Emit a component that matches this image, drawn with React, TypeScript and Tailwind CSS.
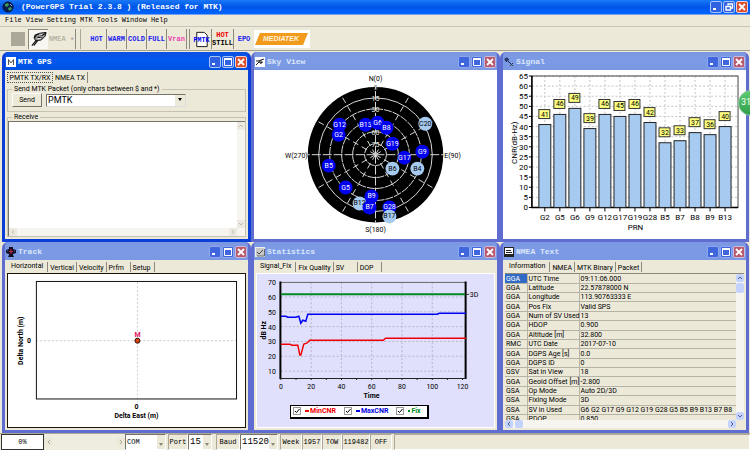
import type { ReactNode } from 'react';
import { clsx } from 'clsx';

const satellites = [
  { id: 'G2', x: 85, y: 65 },
  { id: 'G12', x: 86, y: 55 },
  { id: 'B13', x: 112, y: 55 },
  { id: 'G6', x: 124, y: 53 },
  { id: 'B8', x: 133, y: 58 },
  { id: 'G19', x: 139, y: 74 },
  { id: 'G17', x: 151, y: 88 },
  { id: 'G9', x: 169, y: 82 },
  { id: 'C20', x: 172, y: 54, idle: true },
  { id: 'B6', x: 139, y: 99, idle: true },
  { id: 'B4', x: 164, y: 99, idle: true },
  { id: 'B5', x: 75, y: 96 },
  { id: 'G5', x: 92, y: 118 },
  { id: 'B12', x: 106, y: 134, idle: true },
  { id: 'B9', x: 118, y: 127 },
  { id: 'B7', x: 116, y: 138 },
  { id: 'G28', x: 136, y: 138 },
  { id: 'B17', x: 136, y: 147, idle: true },
];

const signals = [
  { prn: 'G2', cnr: 41 },
  { prn: 'G5', cnr: 46 },
  { prn: 'G6', cnr: 49 },
  { prn: 'G9', cnr: 39 },
  { prn: 'G12', cnr: 46 },
  { prn: 'G17', cnr: 45 },
  { prn: 'G19', cnr: 46 },
  { prn: 'G28', cnr: 42 },
  { prn: 'B5', cnr: 32 },
  { prn: 'B7', cnr: 33 },
  { prn: 'B8', cnr: 37 },
  { prn: 'B9', cnr: 36 },
  { prn: 'B13', cnr: 40 },
];

const nmeaRows = [
  ['GGA', 'UTC Time', '09:11:06.000'],
  ['GGA', 'Latitude', '22.57878000 N'],
  ['GGA', 'Longitude', '113.90763333 E'],
  ['GGA', 'Pos Fix', 'Valid SPS'],
  ['GGA', 'Num of SV Used', '13'],
  ['GGA', 'HDOP', '0.900'],
  ['GGA', 'Altitude [m]', '32.800'],
  ['RMC', 'UTC Date', '2017-07-10'],
  ['GGA', 'DGPS Age [s]', '0.0'],
  ['GGA', 'DGPS ID', '0'],
  ['GSV', 'Sat in View', '18'],
  ['GGA', 'Geoid Offset [m]', '-2.800'],
  ['GSA', 'Op Mode', 'Auto 2D/3D'],
  ['GSA', 'Fixing Mode', '3D'],
  ['GSA', 'SV in Used', 'G6 G2 G17 G9 G12 G19 G28 G5 B5 B9 B13 B7 B8'],
  ['GSA', 'PDOP', '0.850'],
];

function CaptionButton({ kind, faded }: { kind: 'min' | 'max' | 'restore' | 'close'; faded?: boolean }) {
  const label = { min: 'Minimize', max: 'Maximize', restore: 'Restore', close: 'Close' }[kind];
  return (
    <button
      type="button"
      aria-label={label}
      className={clsx(
        'h-3 w-3 shrink-0 rounded-xs border',
        kind === 'close'
          ? faded
            ? 'border-[#c9b8e0] bg-[#b85a6c]'
            : 'border-[#f0d0d0] bg-[#dc4f2c]'
          : faded
            ? 'border-[#8ea6ee] bg-[#3f66dc]'
            : 'border-[#a9c2f8] bg-[#2e62e0]',
      )}
    >
      <svg viewBox="0 0 10 10" className="block h-full w-full" fill="none" stroke="#fff">
        {kind === 'min' && <path d="M2 7h3" strokeWidth="2" />}
        {kind === 'max' && (
          <>
            <path d="M1.5 2v6.5h7V2" />
            <path d="M1 2h8" strokeWidth="2" />
          </>
        )}
        {kind === 'restore' && (
          <>
            <path d="M4 3.5V2h4.5v4H7" strokeWidth="1.4" />
            <path d="M2 4.5h4.5V8H2z" strokeWidth="1.4" />
          </>
        )}
        {kind === 'close' && <path d="M2 2l6 6M8 2L2 8" strokeWidth="1.8" />}
      </svg>
    </button>
  );
}

function GlobeIcon() {
  return (
    <svg viewBox="0 0 12 12" className="h-3 w-3 shrink-0">
      <circle cx="6" cy="6" r="5" fill="#0a1c50" stroke="#061030" />
      <path d="M3 3l3-1 1 2-2 2-2-1zM6 7l3-1 1 2-3 2z" fill="#3c9a58" />
      <path d="M8 3l2 2" stroke="#8ab0e0" />
    </svg>
  );
}

function MtkIcon() {
  return (
    <svg viewBox="0 0 10 10" className="h-2.5 w-2.5 shrink-0">
      <rect width="10" height="10" fill="#fff" />
      <path d="M2.5 8V2.5L5 6l2.5-3.5V8" fill="none" stroke="#555" />
    </svg>
  );
}

function SkyIcon() {
  return (
    <svg viewBox="0 0 10 10" className="h-2.5 w-2.5 shrink-0" fill="none" stroke="#222">
      <rect width="10" height="10" fill="#fff" stroke="none" />
      <path d="M1 4h3l2-1 3-1M4 3l1 3 3-1M1 8l3-3M6 3v4" />
    </svg>
  );
}

function SignalIcon() {
  return (
    <svg viewBox="0 0 10 10" className="h-2.5 w-2.5 shrink-0" fill="none" stroke="#1a2450">
      <circle cx="2.5" cy="2.5" r="1.5" fill="#384878" />
      <path d="M4 4l3 3M4 2l1 1M2 4l1 1" />
      <path d="M7 7l2 2M9 6L6 9" stroke="#333" />
    </svg>
  );
}

function TrackIcon() {
  return (
    <svg viewBox="0 0 10 10" className="h-2.5 w-2.5 shrink-0">
      <path d="M3 0h4v2l3 1v3L7 7v1l1 2H2l1-2V7L0 6V3l3-1z" fill="#140c20" />
      <path d="M5 2v5M3 4.5h4" stroke="#c02848" />
      <path d="M1 4h1M8 4h1" stroke="#3858c0" />
    </svg>
  );
}

function StatisticsIcon() {
  return (
    <svg viewBox="0 0 10 10" className="h-2.5 w-2.5 shrink-0" fill="none">
      <rect x=".5" y=".5" width="9" height="9" fill="#c8c8c8" stroke="#eee" />
      <path d="M2 5l2 2 4-4" stroke="#444" />
      <path d="M2 9h7.5V2" stroke="#666" />
    </svg>
  );
}

function NmeaIcon() {
  return (
    <svg viewBox="0 0 10 10" className="h-2.5 w-2.5 shrink-0" stroke="#222">
      <rect x=".5" y=".5" width="9" height="9" fill="#fff" />
      <path d="M2 3.5h5M2 5.5h6" />
      <path d="M1 8h8" strokeWidth="2" />
    </svg>
  );
}

function MdiWindow({
  title,
  icon,
  active,
  children,
}: {
  title: string;
  icon: ReactNode;
  active?: boolean;
  children: ReactNode;
}) {
  return (
    <section
      className={clsx(
        'flex min-h-0 min-w-0 flex-col rounded-t-md border-x-3 border-b-3',
        active ? 'border-[#0c3fd8] bg-[#0c3fd8]' : 'border-[#5f6cd0] bg-[#5f6cd0]',
      )}
    >
      <header
        className={clsx(
          'flex h-[18px] shrink-0 items-center gap-px rounded-t bg-linear-to-b px-px pt-0.5',
          active ? 'from-[#0c50e4] via-[#0058ee] to-[#0050e0]' : 'from-[#7d97e2] via-[#7b9be6] to-[#7a98e2]',
        )}
      >
        {icon}
        <h2
          className={clsx(
            "flex-1 truncate pl-px font-['Liberation_Mono',monospace] text-[8px] font-bold",
            active ? 'text-white' : 'text-[#dbe6fb]',
          )}
        >
          {title}
        </h2>
        <CaptionButton kind="min" faded={!active} />
        <CaptionButton kind="max" faded={!active} />
        <CaptionButton kind="close" faded={!active} />
      </header>
      {children}
    </section>
  );
}

function Tabs({ items }: { items: string[] }) {
  return (
    <div role="tablist" className="flex h-[13px] shrink-0 items-end pb-px leading-2">
      {items.map((item, i) => (
        <button
          key={item}
          type="button"
          role="tab"
          aria-selected={i === 0}
          className={clsx(
            'h-[10px] min-w-6 border-r border-[#8c897c] text-left whitespace-nowrap',
            i === 0 ? 'pr-1 pb-0.5 pl-1' : 'px-0.5 pt-px',
          )}
        >
          {item}
        </button>
      ))}
    </div>
  );
}

function Arrow({ dir, className }: { dir: 'up' | 'down' | 'left' | 'right'; className?: string }) {
  const d = {
    up: 'M2 5l2-2 2 2',
    down: 'M2 3l2 2 2-2',
    left: 'M5 2L3 4l2 2',
    right: 'M3 2l2 2-2 2',
  }[dir];
  return (
    <svg viewBox="0 0 8 8" className={clsx('h-2 w-2 shrink-0', className)} fill="none" stroke="currentColor">
      <path d={d} />
    </svg>
  );
}

function PmtkPanel() {
  return (
    <div className="flex min-h-0 flex-1 flex-col bg-[#ece9d8] px-0.5 pt-0.5">
      <div role="tablist" className="flex h-3 shrink-0 leading-2">
        <button
          type="button"
          role="tab"
          aria-selected="true"
          className="h-[11px] w-[46px] border border-dotted border-[#555] whitespace-nowrap"
        >
          PMTK TX/RX
        </button>
        <button type="button" role="tab" aria-selected="false" className="h-[11px] border-r border-[#8c897c] px-0.5 pt-px">
          NMEA TX
        </button>
      </div>
      <fieldset className="mt-px min-w-0 border border-[#c5c2b2] px-1 pb-1">
        <legend className="px-0.5 leading-2">Send MTK Packet (only chars between $ and *)</legend>
        <div className="flex items-center gap-1">
          <button
            type="button"
            className="h-[14px] w-[30px] border border-t-white border-r-[#77746a] border-b-[#77746a] border-l-white leading-3"
          >
            Send
          </button>
          <div className="flex h-[13px] w-[140px] border border-t-[#77746a] border-r-[#ddd] border-b-[#ddd] border-l-[#77746a] bg-white">
            <input
              aria-label="PMTK packet"
              defaultValue="PMTK"
              className="min-w-0 flex-1 pl-px text-[9px] leading-3 outline-none"
            />
            <button type="button" aria-label="Show packets" className="flex w-[10px] items-center justify-center bg-[#ece9d8]">
              <svg viewBox="0 0 6 4" className="h-1 w-1.5">
                <path d="M1 0h4L3 3z" />
              </svg>
            </button>
          </div>
        </div>
      </fieldset>
      <fieldset className="mt-px mb-0.5 flex min-h-0 min-w-0 flex-1 flex-col border border-[#c5c2b2]">
        <legend className="ml-1 px-0.5 leading-2">
          <label htmlFor="receive">Receive</label>
        </legend>
        <div className="flex h-full min-h-0 flex-1 border-t border-l border-[#77746a] bg-white">
          <div className="flex min-w-0 flex-1 flex-col">
            <textarea id="receive" className="min-h-0 flex-1 resize-none outline-none" />
            <div className="flex h-2 justify-between bg-[#f6f5f0] text-[#c0bdb0]">
              <Arrow dir="left" className="bg-[#eceae0]" />
              <Arrow dir="right" className="bg-[#eceae0]" />
            </div>
          </div>
          <div className="flex w-2 flex-col justify-between bg-[#f6f5f0] pb-2 text-[#c0bdb0]">
            <Arrow dir="up" className="bg-[#eceae0]" />
            <Arrow dir="down" className="bg-[#eceae0]" />
          </div>
        </div>
      </fieldset>
    </div>
  );
}

function SkyPlot() {
  const cx = 122;
  const cy = 85;
  const spokes = Array.from({ length: 12 }, (_, i) => (i * Math.PI) / 6);
  return (
    <svg viewBox="0 0 244 170" className="min-h-0 w-full flex-1 bg-white" fontSize="7" textAnchor="middle">
      <circle cx={cx} cy={cy} r="68" />
      <g stroke="#d8d8d8" fill="none">
        {[11, 23, 34, 46, 57].map((r) => (
          <circle key={r} cx={cx} cy={cy} r={r} strokeDasharray={r === 57 ? undefined : '8 1'} />
        ))}
        {spokes.map((a, i) => (
          <line
            key={i}
            x1={cx}
            y1={cy}
            x2={cx + 68 * Math.cos(a)}
            y2={cy + 68 * Math.sin(a)}
            strokeDasharray={i % 3 === 0 ? '9 2' : '6 4'}
          />
        ))}
      </g>
      <text x={cx} y="11">N(0)</text>
      <text x={cx} y="163">S(180)</text>
      <text x="54" y="88" textAnchor="end">W(270)</text>
      <text x="191" y="88" textAnchor="start">E(90)</text>
      <g fill="#e8e8e8">
        <text x={cx} y="20" fill="#999">5</text>
        <text x={cx} y="31">15</text>
        <text x={cx} y="42">30</text>
        <text x={cx} y="65">60</text>
        <text x={cx} y="77">75</text>
      </g>
      {satellites.map((s) => (
        <g key={s.id}>
          <circle cx={s.x} cy={s.y} r="7" fill={s.idle ? '#a6caf0' : '#0000f0'} />
          <text x={s.x} y={s.y + 2} fill={s.idle ? '#000' : '#fff'}>
            {s.id}
          </text>
        </g>
      ))}
    </svg>
  );
}

function SignalChart() {
  const left = 29;
  const right = 236;
  const base = 138;
  const yOf = (v: number) => base - (v * 132) / 65;
  const ticks = Array.from({ length: 14 }, (_, i) => i * 5);
  const xOf = (i: number) => 42 + (i * 181) / 12;
  return (
    <svg viewBox="0 0 244 170" className="min-h-0 w-full flex-1 bg-white" fontSize="8" textAnchor="middle">
      <g stroke="#c4c4c4" strokeDasharray="2 2">
        {ticks.map((t) => (
          <line key={t} x1={left} x2={right} y1={yOf(t)} y2={yOf(t)} />
        ))}
        {signals.map((s, i) => (
          <line key={s.prn} x1={xOf(i)} x2={xOf(i)} y1="6" y2={base} />
        ))}
      </g>
      <rect x={left} y="6" width={right - left} height="132" fill="none" stroke="#444" />
      <path d={`M${left} 6V${base}H${right}`} fill="none" stroke="#000" strokeWidth="1.5" />
      {ticks.map((t) => (
        <g key={t}>
          <line x1={left - 3} x2={left} y1={yOf(t)} y2={yOf(t)} stroke="#000" />
          <text x={left - 4} y={yOf(t) + 3} textAnchor="end">
            {t}
          </text>
        </g>
      ))}
      {signals.map((s, i) => (
        <g key={s.prn}>
          <rect x={xOf(i) - 6} y={yOf(s.cnr)} width="12" height={base - yOf(s.cnr)} fill="#a6caf0" stroke="#222" />
          <rect x={xOf(i) - 6} y={yOf(s.cnr) - 15} width="11" height="9" fill="#ffff80" stroke="#333" />
          <text x={xOf(i)} y={yOf(s.cnr) - 8} fontSize="7">
            {s.cnr}
          </text>
          <line x1={xOf(i)} x2={xOf(i)} y1={base} y2={base + 4} stroke="#000" />
          <text x={xOf(i)} y="151">
            {s.prn}
          </text>
        </g>
      ))}
      <text x="133" y="161">PRN</text>
      <text transform="translate(14 73) rotate(-90)">CNR(dB-Hz)</text>
    </svg>
  );
}

function TrackPanel() {
  return (
    <div className="flex min-h-0 flex-1 flex-col bg-[#ece9d8] px-0.5 pb-0.5">
      <Tabs items={['Horizontal', 'Vertical', 'Velocity', 'Prfm', 'Setup']} />
      <svg
        viewBox="0 0 238 153"
        className="min-h-0 w-full flex-1 border border-[#1a1408] bg-white"
        fontSize="7"
        fontWeight="bold"
        textAnchor="middle"
      >
        <path d="M28 67h201M130 8v121" stroke="#ccc" strokeDasharray="2 2" />
        <rect x="28.5" y="7.5" width="201" height="118" fill="none" stroke="#111" />
        <text x="130" y="63" fill="#e0185c">M</text>
        <circle cx="130" cy="67" r="2.5" fill="#e04010" stroke="#201008" />
        <text x="129" y="136">0</text>
        <text x="21" y="69">0</text>
        <text x="129" y="145">Delta East (m)</text>
        <text transform="translate(15 67) rotate(-90)">Delta North (m)</text>
      </svg>
    </div>
  );
}

function StatisticsPanel() {
  const series = [
    { name: 'MinCNR', color: 'text-[#f00000]', mark: 'bg-[#f00000] w-1' },
    { name: 'MaxCNR', color: 'text-[#0000e0]', mark: 'bg-[#0000e0] w-1' },
    { name: 'Fix', color: 'text-[#008a20]', mark: 'bg-[#008a20] w-0.5' },
  ];
  return (
    <div className="flex min-h-0 flex-1 flex-col bg-[#ece9d8] px-0.5 pb-0.5">
      <Tabs items={['Signal_Fix', 'Fix Quality', 'SV', 'DOP']} />
      <div className="flex min-h-0 flex-1 flex-col border border-white bg-[#e0e0fc] pb-2">
        <svg viewBox="0 0 238 130" className="min-h-0 w-full flex-1" fontSize="7" textAnchor="middle">
          <g stroke="#b4b4cc" strokeDasharray="2 2">
            {[20, 40, 60, 80, 100].map((t) => (
              <line key={t} x1={24 + t * 1.52} x2={24 + t * 1.52} y1="8" y2="104" />
            ))}
            {[10, 20, 30, 40, 50, 60].map((v) => (
              <line key={v} x1="24" x2="209" y1={112 - v * 1.49} y2={112 - v * 1.49} />
            ))}
          </g>
          <path d="M24 8h185" stroke="#666" />
          <path d="M23.5 7v98M209.5 7v98" stroke="#000" strokeWidth="2" />
          <path d="M23 104.5h187" stroke="#222" />
          {Array.from({ length: 13 }, (_, i) => (
            <line key={i} x1={24 + i * 15.2} x2={24 + i * 15.2} y1="104" y2="106" stroke="#222" />
          ))}
          {[10, 20, 30, 40, 50, 60, 70].map((v) => (
            <text key={v} x="19" y={115 - v * 1.49} textAnchor="end">
              {v}
            </text>
          ))}
          {[0, 20, 40, 60, 80, 100, 120].map((t) => (
            <text key={t} x={24 + t * 1.52} y="115">
              {t}
            </text>
          ))}
          <g fill="none" strokeWidth="1.5">
            <path d="M24 20h185" stroke="#008a20" strokeWidth="2" />
            <path d="M24 42h5l2 1h8l3-1 2 7 2-3 3 1 2-7h130l2-1h27" stroke="#0000f0" />
            <path d="M24 70h9l2 1h6l2 10h1l3-11 3-1 3-3h74l2-2h81" stroke="#f00000" />
          </g>
          <path d="M210 20h3" stroke="#333" />
          <text x="218" y="23">3D</text>
          <text x="115" y="124" fontWeight="bold">Time</text>
          <text transform="translate(9 56) rotate(-90)" fontWeight="bold">dB Hz</text>
        </svg>
        <div className="ml-[33px] flex h-[14px] w-[139px] shrink-0 items-center gap-2 border border-r-2 border-b-2 border-black bg-white px-0.5">
          {series.map((s) => (
            <label key={s.name} className={clsx('flex items-center gap-1 leading-2 font-bold', s.color)}>
              <span className="grid h-2 w-2">
                <input
                  type="checkbox"
                  defaultChecked
                  className="peer col-start-1 row-start-1 h-2 w-2 appearance-none border border-[#999] bg-white"
                />
                <svg
                  viewBox="0 0 8 8"
                  className="pointer-events-none invisible col-start-1 row-start-1 h-2 w-2 peer-checked:visible"
                  fill="none"
                  stroke="#000"
                >
                  <path d="M2 4l1.5 1.500L6.500 2" />
                </svg>
              </span>
              <span className="flex items-center gap-px">
                <span className={clsx('h-0.5', s.mark)} />
                {s.name}
              </span>
            </label>
          ))}
        </div>
      </div>
    </div>
  );
}

function NmeaPanel() {
  return (
    <div className="flex min-h-0 flex-1 flex-col bg-[#ece9d8] px-0.5 pb-0.5">
      <Tabs items={['Information', 'NMEA', 'MTK Binary', 'Packet']} />
      <div className="flex min-h-0 flex-1 basis-0 border-t border-[#8c897c]">
        <div className="h-0 min-h-full min-w-0 flex-1 overflow-hidden">
          <table className="h-[150px] w-full table-fixed border-collapse leading-2">
            <colgroup>
              <col className="w-[22px]" />
              <col className="w-[52px]" />
              <col />
            </colgroup>
            <tbody>
              {nmeaRows.map(([type, name, value], i) => (
                <tr key={i} className="border-b border-[#b5b2a6]">
                  <td className={clsx('border-r border-[#b5b2a6] p-0 pl-px', i === 0 && 'bg-[#316ac5] text-white')}>
                    {type}
                  </td>
                  <td className="border-r border-[#b5b2a6] p-0 pl-px whitespace-nowrap">{name}</td>
                  <td className="p-0 pl-px whitespace-nowrap">{value}</td>
                </tr>
              ))}
            </tbody>
          </table>
        </div>
        <div className="flex w-2 flex-col bg-[#f6f5f0] text-[#4d6185]">
          <Arrow dir="up" className="rounded-xs bg-[#c3d3fd]" />
          <div className="mt-px h-2.5 rounded-xs bg-[#c3d3fd]" />
          <Arrow dir="down" className="mt-auto rounded-xs bg-[#c3d3fd]" />
        </div>
      </div>
      <div className="mr-2 flex h-2 shrink-0 bg-[#f6f5f0] text-[#4d6185]">
        <Arrow dir="left" className="rounded-xs bg-[#c3d3fd]" />
        <div className="ml-0.5 w-2 rounded-xs bg-[#c3d3fd]" />
        <Arrow dir="right" className="ml-auto rounded-xs bg-[#c3d3fd]" />
      </div>
    </div>
  );
}

function MainHeader() {
  return (
    <header className="flex h-[15px] shrink-0 items-center gap-px border-b border-[#7aa0ec] bg-linear-to-b from-[#1a78f8] via-[#0054e8] to-[#0066ff] px-0.5">
      <GlobeIcon />
      <h1 className="flex-1 truncate pl-1.5 font-['Liberation_Mono',monospace] text-[8px] font-bold text-white">
        (PowerGPS Trial 2.3.8 ) (Released for MTK)
      </h1>
      <CaptionButton kind="min" />
      <CaptionButton kind="restore" />
      <CaptionButton kind="close" />
    </header>
  );
}

function MenuBar() {
  return (
    <nav className="flex h-[11px] shrink-0 items-center gap-1 pl-[5px] font-['Liberation_Mono',monospace]">
      {['File', 'View', 'Setting', 'MTK', 'Tools', 'Window', 'Help'].map((item) => (
        <button key={item} type="button">
          {item}
        </button>
      ))}
    </nav>
  );
}

function Toolbar() {
  const starts = [
    { label: 'HOT', color: 'text-[#2020f0]' },
    { label: 'WARM', color: 'text-[#2020f0]' },
    { label: 'COLD', color: 'text-[#2020f0]' },
    { label: 'FULL', color: 'text-[#2020f0]' },
    { label: 'Vran', color: 'text-[#f040b0]' },
  ];
  return (
    <div className="flex h-[25px] shrink-0 items-center border-t border-b border-t-[#c8c6bc] border-b-[#a5a294] pl-2 font-['Liberation_Mono',monospace] leading-2">
      <button type="button" aria-label="Stop" className="flex h-5 w-5 items-center justify-center">
        <span className="h-[14px] w-[14px] bg-[#aca899]" />
      </button>
      <button
        type="button"
        aria-label="Connect"
        className="flex h-5 w-5 items-center justify-center border-t border-l border-[#8c897c] bg-[#f8f7f2]"
      >
        <svg viewBox="0 0 20 20" className="h-5 w-5" fill="none" stroke="#111">
          <path d="M6 6l5-2 7-1-1 4-4 4-6 1-1-2z" fill="#999" />
          <path d="M8 5l6 1 4-2M9 8l5 1M5 9l3-3M3 17l5-6M5 17l4-5" strokeWidth="1.2" />
          <path d="M10 6l4-1M9 10l4-1" stroke="#eee" />
        </svg>
      </button>
      <button type="button" className="h-5 w-7 border-r border-[#8c897c] whitespace-nowrap text-[#a5a294]">
        NMEA ▾
      </button>
      <span className="ml-1 h-5 border-l border-[#aca899]" />
      <div className="ml-1.5 flex">
        {starts.map((s) => (
          <button
            key={s.label}
            type="button"
            className={clsx('h-5 w-5 border-r border-[#8c897c] text-center font-bold', s.color)}
          >
            {s.label}
          </button>
        ))}
      </div>
      <span className="mx-0.5 h-5 border-l border-[#8c897c]" />
      <button type="button" className="h-5 w-5 border-r border-[#8c897c]">
        <svg viewBox="0 0 20 20" className="h-full w-full" fontSize="7" fontWeight="bold" textAnchor="middle">
          <path d="M5 3h8l3 3v12H5z" fill="#fff" stroke="#111" />
          <text x="10" y="13" fill="#0000f0">PMTK</text>
        </svg>
      </button>
      <button type="button" className="flex h-5 w-[22px] flex-col items-center justify-center border-r border-[#8c897c] font-bold">
        <span className="text-[#f00000]">HOT</span>
        <span>STILL</span>
      </button>
      <button type="button" className="h-5 w-5 font-bold text-[#2020f0]">EPO</button>
      <svg viewBox="0 0 56 18" className="h-[18px] w-14 bg-white">
        <path d="M6 3h48l-5 12H1z" fill="#f29a1c" />
        <text
          x="27"
          y="11"
          fill="#fff4dc"
          fontSize="7"
          fontWeight="bold"
          fontStyle="italic"
          fontFamily="'Liberation Sans', sans-serif"
          textAnchor="middle"
        >
          MEDIATEK
        </text>
      </svg>
    </div>
  );
}

function StatusSelect({ label, value, className }: { label: string; value: string; className?: string }) {
  return (
    <div className={clsx('flex border border-t-[#77746a] border-r-white border-b-white border-l-[#77746a] bg-white', className)}>
      <select aria-label={label} className="min-w-0 flex-1 appearance-none overflow-hidden pl-px outline-none">
        <option>{value}</option>
      </select>
      <span className="flex w-2 items-end justify-center bg-[#ece9d8] pb-0.5">
        <svg viewBox="0 0 6 4" className="h-1 w-1.5" fill="#8c897c">
          <path d="M1 0h4L3 3z" />
        </svg>
      </span>
    </div>
  );
}

function StatusBar() {
  const cell = 'border border-t-[#aca899] border-r-white border-b-white border-l-[#aca899] text-center';
  return (
    <footer className="flex h-[18px] shrink-0 items-stretch border-t border-b border-t-[#aca899] border-b-[#3a66b8] pl-px font-['Liberation_Mono',monospace] leading-[15px]">
      <div className="w-[43px] border border-[#333] bg-white text-center">0%</div>
      <div className="ml-px flex w-[80px] items-center justify-between bg-[#efece0] text-[#aca899]">
        <Arrow dir="left" className="bg-[#ece9d8]" />
        <Arrow dir="right" className="bg-[#ece9d8]" />
      </div>
      <StatusSelect label="Interface" value="COM" className="w-[41px]" />
      <div className={clsx(cell, 'ml-0.5 w-5')}>Port</div>
      <StatusSelect label="Port" value="15" className="w-6 text-[9px]" />
      <div className={clsx(cell, 'ml-1 w-6')}>Baud</div>
      <StatusSelect label="Baud" value="115200" className="w-[38px] text-[9px]" />
      <div className={clsx(cell, 'ml-0.5 w-[22px]')}>Week</div>
      <div className={clsx(cell, 'w-5')}>1957</div>
      <div className={clsx(cell, 'w-5')}>TOW</div>
      <div className={clsx(cell, 'w-[28px]')}>119482</div>
      <div className={clsx(cell, 'w-[22px]')}>OFF</div>
      <div className={clsx(cell, 'ml-0.5 flex-1')} />
    </footer>
  );
}

export default function App() {
  return (
    <div className="relative flex min-h-screen flex-col overflow-hidden bg-[#ece9d8] font-[Roboto,'Liberation_Sans',sans-serif] text-[7px] text-black">
      <MainHeader />
      <MenuBar />
      <Toolbar />
      <main className="grid flex-1 grid-cols-3 grid-rows-2 pt-px pr-px pl-0.5">
        <MdiWindow title="MTK GPS" icon={<MtkIcon />} active>
          <PmtkPanel />
        </MdiWindow>
        <MdiWindow title="Sky View" icon={<SkyIcon />}>
          <SkyPlot />
        </MdiWindow>
        <MdiWindow title="Signal" icon={<SignalIcon />}>
          <SignalChart />
        </MdiWindow>
        <MdiWindow title="Track" icon={<TrackIcon />}>
          <TrackPanel />
        </MdiWindow>
        <MdiWindow title="Statistics" icon={<StatisticsIcon />}>
          <StatisticsPanel />
        </MdiWindow>
        <MdiWindow title="NMEA Text" icon={<NmeaIcon />}>
          <NmeaPanel />
        </MdiWindow>
      </main>
      <StatusBar />
      <div className="absolute top-[90px] -right-[14px] flex h-[26px] w-[26px] items-center rounded-full border border-[#8fc79a] bg-linear-to-b from-[#5ccc70] to-[#2f9e4a] pl-0.5 text-[9px] text-white">
        31
      </div>
    </div>
  );
}
